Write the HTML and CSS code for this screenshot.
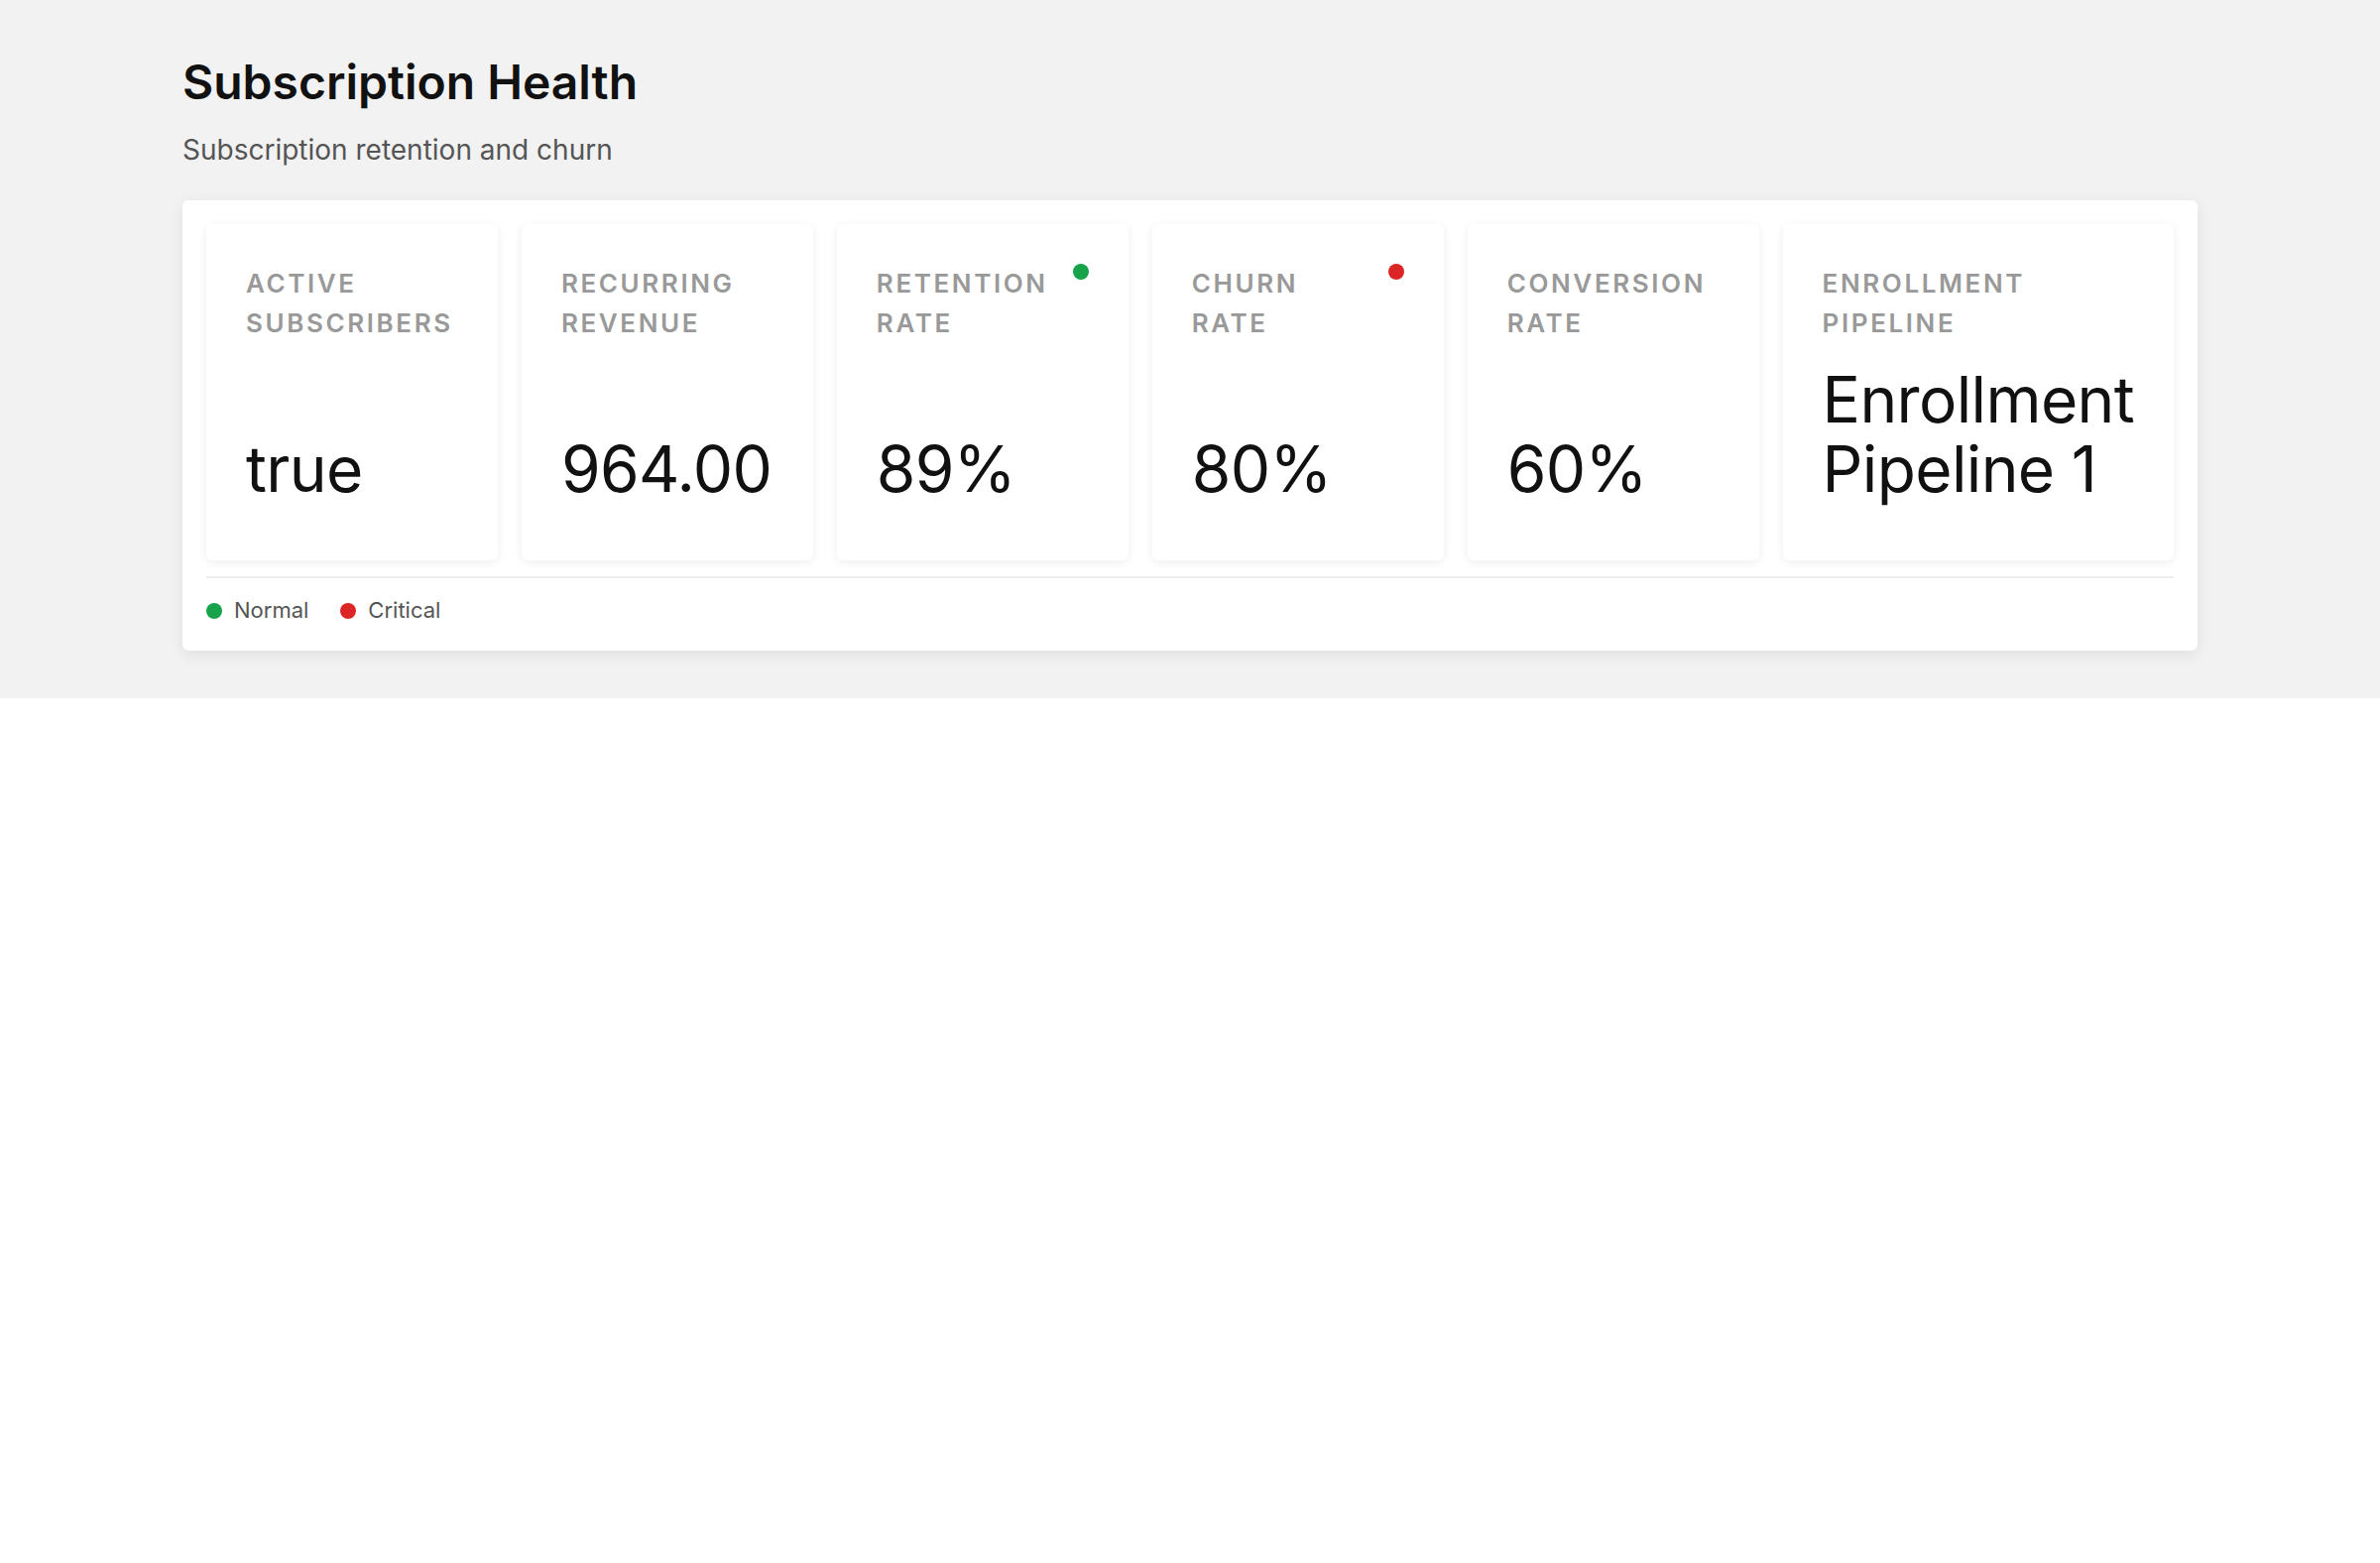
FILE: index.html
```html
<!DOCTYPE html>
<html lang="en">
<head>
    <meta charset="UTF-8">
    <meta name="viewport" content="width=device-width, initial-scale=1.0">
    <title>Subscription Health</title>
    <link rel="stylesheet" href="styles.css">
</head>
<body>
    <div class="page">
        <h1 class="page-title">Subscription Health</h1>
        <p class="page-subtitle">Subscription retention and churn</p>

        <div class="panel">
            <div class="metrics">
                <div class="metric">
                    <div class="metric-head">
                        <span class="metric-label">ACTIVE SUBSCRIBERS</span>
                    </div>
                    <div class="metric-value">true</div>
                </div>
                <div class="metric">
                    <div class="metric-head">
                        <span class="metric-label">RECURRING REVENUE</span>
                    </div>
                    <div class="metric-value">964.00</div>
                </div>
                <div class="metric">
                    <div class="metric-head">
                        <span class="metric-label">RETENTION RATE</span>
                        <span class="dot dot-normal"></span>
                    </div>
                    <div class="metric-value">89%</div>
                </div>
                <div class="metric">
                    <div class="metric-head">
                        <span class="metric-label">CHURN RATE</span>
                        <span class="dot dot-critical"></span>
                    </div>
                    <div class="metric-value">80%</div>
                </div>
                <div class="metric">
                    <div class="metric-head">
                        <span class="metric-label">CONVERSION RATE</span>
                    </div>
                    <div class="metric-value">60%</div>
                </div>
                <div class="metric">
                    <div class="metric-head">
                        <span class="metric-label">ENROLLMENT PIPELINE</span>
                    </div>
                    <div class="metric-value">Enrollment Pipeline 1</div>
                </div>
            </div>

            <!-- Status legend -->
            <div class="legend">
                <span class="legend-item"><span class="dot dot-normal"></span>Normal</span>
                <span class="legend-item"><span class="dot dot-critical"></span>Critical</span>
            </div>
        </div>
    </div>
</body>
</html>
```

FILE: styles.css
```css
body {
    margin: 0;
    font-family: Inter, "Noto Sans", sans-serif;
    background: #ffffff;
    color: #111111;
}

.page {
    background: #f2f2f2;
    padding: 54px 184px 48px;
}

.page-title {
    margin: 0;
    font-size: 48px;
    font-weight: 600;
    line-height: 1.2;
    color: #111111;
}

.page-subtitle {
    margin: 18px 0 30px;
    font-size: 28px;
    line-height: 1.5;
    color: #555555;
}

/* Outer white panel */
.panel {
    background: #ffffff;
    border-radius: 6px;
    padding: 24px;
    box-shadow: 0 4px 16px rgba(0, 0, 0, 0.08);
}

.metrics {
    display: flex;
    gap: 24px;
}

.metric {
    flex: 1 1 0;
    display: flex;
    flex-direction: column;
    background: #ffffff;
    border-radius: 6px;
    padding: 40px 40px 57px;
    box-shadow: 0 2px 10px rgba(0, 0, 0, 0.07);
}

.metric-head {
    display: flex;
    justify-content: space-between;
    align-items: flex-start;
    gap: 16px;
}

.metric-label {
    font-size: 26px;
    font-weight: 600;
    line-height: 40px;
    letter-spacing: 0.1em;
    color: #999999;
}

.metric-value {
    margin-top: auto;
    padding-top: 22px;
    font-size: 64px;
    line-height: 1.1;
    letter-spacing: -0.01em;
    color: #111111;
}

.dot {
    flex: none;
    width: 16px;
    height: 16px;
    border-radius: 50%;
}

.dot-normal {
    background: #16a34a;
}

.dot-critical {
    background: #dc2626;
}

/* Legend under the cards */
.legend {
    display: flex;
    gap: 32px;
    margin-top: 16px;
    padding-top: 16px;
    border-top: 2px solid #eeeeee;
}

.legend-item {
    display: flex;
    align-items: center;
    gap: 12px;
    font-size: 22px;
    line-height: 33px;
    color: #555555;
}
```
